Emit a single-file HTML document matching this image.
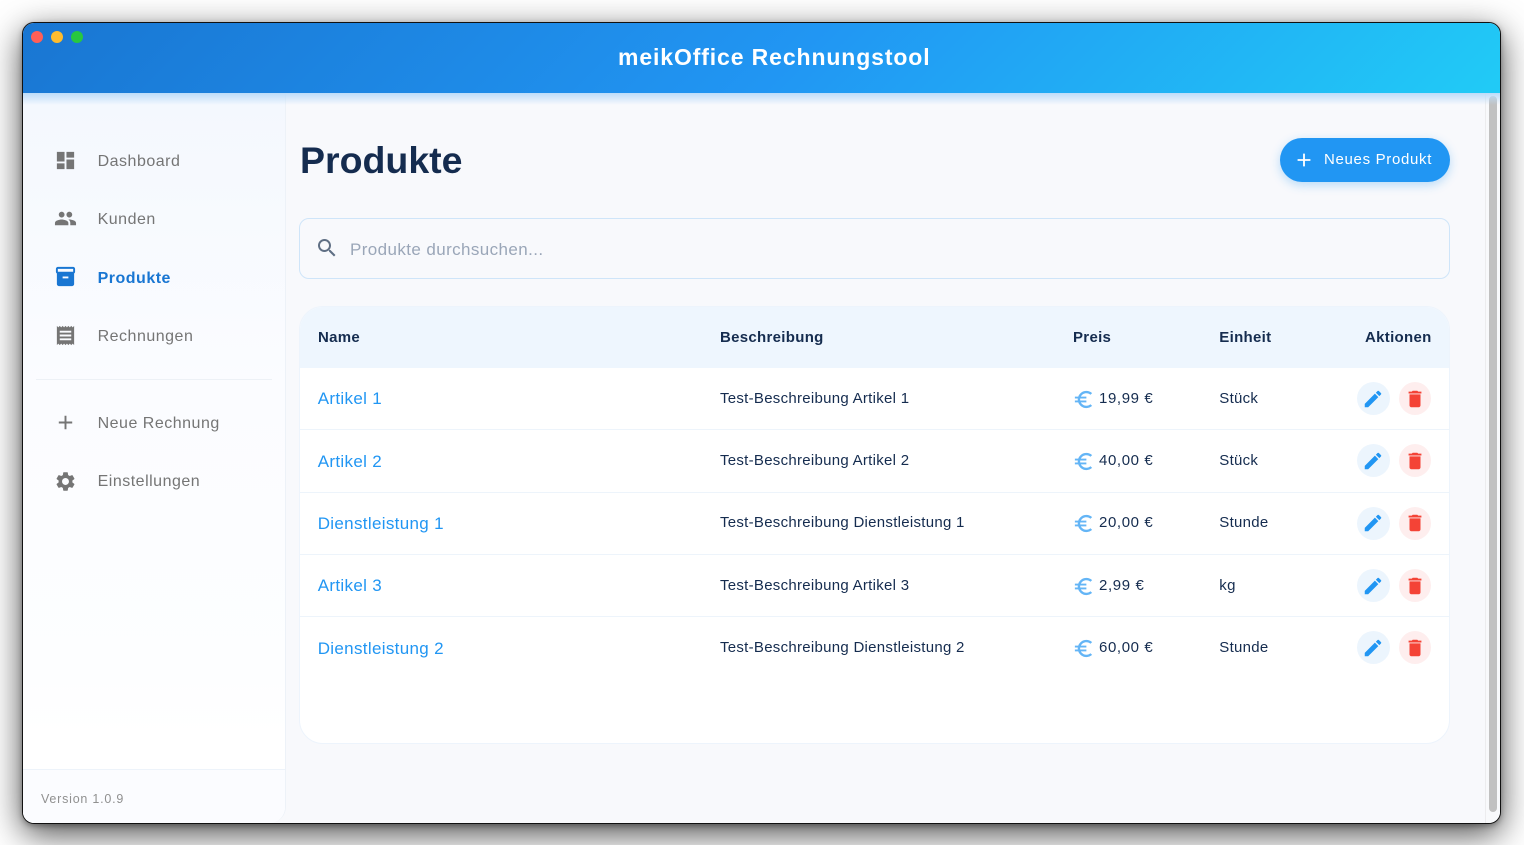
<!DOCTYPE html>
<html lang="de"><head><meta charset="utf-8"><title>meikOffice Rechnungstool</title>
<style>
*{box-sizing:border-box}
html,body{margin:0;width:1524px;height:845px;overflow:hidden;background:#fff;font-family:"Liberation Sans",sans-serif}
#win{position:absolute;left:22px;top:22px;width:1479px;height:802px;border-radius:12px;background:#f8f9fc;box-shadow:0 10px 34px rgba(0,0,0,.7),0 2px 6px rgba(0,0,0,.3);overflow:hidden;border:1px solid #111}
#page{position:absolute;left:-23px;top:-23px;width:1524px;height:845px}
.t{position:absolute;white-space:nowrap;line-height:20px}
svg{position:absolute;display:block}
#hdr{position:absolute;left:23px;top:23px;width:1477px;height:70px;background:linear-gradient(135deg,#1976d2 0%,#2196f3 52%,#21cbf6 100%);z-index:3}
#hsh{position:absolute;left:23px;top:93px;width:1477px;height:12px;background:linear-gradient(#bcdcf9,rgba(220,236,252,0));z-index:2}
#side{position:absolute;left:23px;top:93px;width:263px;height:730px;background:linear-gradient(#f4f8fe,#fbfcff 40%,#fdfeff 80%,#fff 88%);border-right:1px solid #edf2f8;border-bottom-right-radius:16px}
.dot{position:absolute;top:31px;width:12px;height:12px;border-radius:50%;z-index:4}
.nav{font-size:16px;color:#757575;left:97.6px;letter-spacing:.5px}
.ic{width:23px;height:23px;fill:#757575;left:54px}
.th{font-size:15px;font-weight:700;color:#152c4f;letter-spacing:.3px}
.nm{font-size:17px;color:#2196f3;left:317.7px;letter-spacing:.33px}
.cell{font-size:15px;color:#152c4f;letter-spacing:.28px}
.pr{letter-spacing:.62px;left:1099px}
.eu{left:1072px;width:23px;height:23px;fill:#64b5f6}
.c{position:absolute;width:33px;height:33px;border-radius:50%}
.ac{width:22px;height:22px}
.ln{position:absolute;left:300px;width:1150px;height:1px;background:#edf4fb}
</style></head><body>
<svg width="0" height="0" style="position:absolute">
<symbol id="euro" viewBox="0 0 24 24"><path d="M15 18.5c-2.51 0-4.68-1.42-5.76-3.5H15v-2H8.58c-.05-.33-.08-.66-.08-1s.03-.67.08-1H15V9H9.24C10.32 6.92 12.5 5.5 15 5.5c1.61 0 3.09.59 4.23 1.57L21 5.3C19.41 3.87 17.3 3 15 3c-3.92 0-7.24 2.51-8.48 6H3v2h3.06c-.04.33-.06.66-.06 1s.02.67.06 1H3v2h3.52c1.24 3.49 4.56 6 8.48 6 2.31 0 4.41-.87 6-2.3l-1.78-1.77c-1.13.98-2.6 1.57-4.22 1.57z"/></symbol>
<symbol id="edit" viewBox="0 0 24 24"><path d="M3 17.25V21h3.75L17.81 9.94l-3.75-3.75L3 17.25zM20.71 7.04c.39-.39.39-1.02 0-1.41l-2.34-2.34c-.39-.39-1.02-.39-1.41 0l-1.83 1.83 3.75 3.75 1.83-1.83z"/></symbol>
<symbol id="del" viewBox="0 0 24 24"><path d="M6 19c0 1.1.9 2 2 2h8c1.1 0 2-.9 2-2V7H6v12zM19 4h-3.5l-1-1h-5l-1 1H5v2h14V4z"/></symbol>
</svg>
<div id="win"><div id="page">
<div id="side"></div>
<div id="hsh"></div>
<div id="hdr"></div>
<div class="dot" style="left:31px;background:#ff5f57"></div>
<div class="dot" style="left:51px;background:#febc2e"></div>
<div class="dot" style="left:71px;background:#28c840"></div>
<div class="t" style="left:618px;top:47px;font-size:23px;font-weight:700;color:#fff;letter-spacing:.88px;z-index:4">meikOffice Rechnungstool</div>

<svg class="ic" style="top:149px" viewBox="0 0 24 24"><path d="M3 13h8V3H3v10zm0 8h8v-6H3v6zm10 0h8V11h-8v10zm0-18v6h8V3h-8z"/></svg>
<div class="t nav" style="top:151.5px">Dashboard</div>
<svg class="ic" style="top:207px" viewBox="0 0 24 24"><path d="M16 11c1.66 0 2.99-1.34 2.99-3S17.66 5 16 5c-1.66 0-3 1.34-3 3s1.34 3 3 3zm-8 0c1.66 0 2.99-1.34 2.99-3S9.66 5 8 5C6.34 5 5 6.34 5 8s1.34 3 3 3zm0 2c-2.33 0-7 1.17-7 3.5V19h14v-2.5c0-2.33-4.67-3.5-7-3.5zm8 0c-.29 0-.62.02-.97.05 1.16.84 1.97 1.97 1.97 3.45V19h6v-2.5c0-2.33-4.67-3.5-7-3.5z"/></svg>
<div class="t nav" style="top:210px">Kunden</div>
<svg class="ic" style="top:265px;fill:#1976d2" viewBox="0 0 24 24"><path d="M20 2H4c-1 0-2 .9-2 2v3.01c0 .72.43 1.34 1 1.69V20c0 1.1 1.1 2 2 2h14c.9 0 2-.9 2-2V8.7c.57-.35 1-.97 1-1.69V4c0-1.1-1-2-2-2zm-5 12H9v-2h6v2zm5-7H4V4l16-.02V7z"/></svg>
<div class="t nav" style="top:269px;color:#1976d2;font-weight:700;letter-spacing:.5px">Produkte</div>
<svg class="ic" style="top:324px" viewBox="0 0 24 24"><path d="M18 17H6v-2h12v2zm0-4H6v-2h12v2zm0-4H6V7h12v2zM3 22l1.5-1.5L6 22l1.5-1.5L9 22l1.5-1.5L12 22l1.5-1.5L15 22l1.5-1.5L18 22l1.5-1.5L21 22V2l-1.5 1.5L18 2l-1.5 1.5L15 2l-1.5 1.5L12 2l-1.5 1.5L9 2 7.5 3.5 6 2 4.5 3.5 3 2v20z"/></svg>
<div class="t nav" style="top:327px">Rechnungen</div>
<div style="position:absolute;left:36px;top:379px;width:236px;height:1px;background:#edf1f6"></div>
<svg class="ic" style="top:411px" viewBox="0 0 24 24"><path d="M19 13h-6v6h-2v-6H5v-2h6V5h2v6h6v2z"/></svg>
<div class="t nav" style="top:414px">Neue Rechnung</div>
<svg class="ic" style="top:470px" viewBox="0 0 24 24"><path d="M19.14 12.94c.04-.3.06-.61.06-.94 0-.32-.02-.64-.07-.94l2.03-1.58c.18-.14.23-.41.12-.61l-1.92-3.32c-.12-.22-.37-.29-.59-.22l-2.39.96c-.5-.38-1.03-.7-1.62-.94l-.36-2.54c-.04-.24-.24-.41-.48-.41h-3.84c-.24 0-.43.17-.47.41l-.36 2.54c-.59.24-1.13.57-1.62.94l-2.39-.96c-.22-.08-.47 0-.59.22L2.74 8.87c-.12.21-.08.47.12.61l2.03 1.58c-.05.3-.09.63-.09.94s.02.64.07.94l-2.03 1.58c-.18.14-.23.41-.12.61l1.92 3.32c.12.22.37.29.59.22l2.39-.96c.5.38 1.03.7 1.62.94l.36 2.54c.05.24.24.41.48.41h3.84c.24 0 .44-.17.47-.41l.36-2.54c.59-.24 1.13-.56 1.62-.94l2.39.96c.22.08.47 0 .59-.22l1.92-3.32c.12-.22.07-.47-.12-.61l-2.01-1.58zM12 15.6c-1.98 0-3.6-1.62-3.6-3.6s1.62-3.6 3.6-3.6 3.6 1.62 3.6 3.6-1.62 3.6-3.6 3.6z"/></svg>
<div class="t nav" style="top:472px">Einstellungen</div>
<div style="position:absolute;left:23px;top:769px;width:262px;height:1px;background:#edf3fa"></div>
<div style="position:absolute;left:23px;top:770px;width:262px;height:53px;background:#fbfcff;border-bottom-right-radius:16px"></div>
<div class="t" style="left:41px;top:789px;font-size:12.5px;color:#909090;letter-spacing:.78px">Version 1.0.9</div>

<div class="t" style="left:300px;top:140px;line-height:40px;font-size:37.5px;font-weight:700;color:#152c4f">Produkte</div>
<div style="position:absolute;left:1280px;top:138px;width:170px;height:44px;border-radius:22px;background:#2196f3;box-shadow:0 3px 10px rgba(33,150,243,.3)"></div>
<svg style="left:1293px;top:149px;width:22px;height:22px;fill:#fff" viewBox="0 0 24 24"><path d="M19 13h-6v6h-2v-6H5v-2h6V5h2v6h6v2z"/></svg>
<div class="t" style="left:1324px;top:149.5px;font-size:15px;color:#fff;letter-spacing:.68px">Neues Produkt</div>

<div style="position:absolute;left:299px;top:218px;width:1151px;height:61px;border:1px solid #cfe5f9;border-radius:10px;background:#f8f9fc"></div>
<svg style="left:315px;top:236px;width:24px;height:24px;fill:#5f6f84" viewBox="0 0 24 24"><path d="M15.5 14h-.79l-.28-.27C15.41 12.59 16 11.11 16 9.5 16 5.91 13.09 3 9.5 3S3 5.91 3 9.5 5.91 16 9.5 16c1.61 0 3.09-.59 4.23-1.57l.27.28v.79l5 4.99L20.49 19l-4.99-5zm-6 0C7.01 14 5 11.99 5 9.5S7.01 5 9.5 5 14 7.01 14 9.5 11.99 14 9.5 14z"/></svg>
<div class="t" style="left:350px;top:239.5px;font-size:17px;color:#9aa6b8;letter-spacing:.4px">Produkte durchsuchen...</div>

<div style="position:absolute;left:299px;top:306px;width:1151px;height:438px;border-radius:24px;background:#fff;border:1px solid #edf4fc;overflow:hidden"><div style="height:61px;background:#eef6fe"></div></div>
<div class="t th" style="left:318px;top:327.5px">Name</div>
<div class="t th" style="left:720px;top:327.5px">Beschreibung</div>
<div class="t th" style="left:1073px;top:327.5px">Preis</div>
<div class="t th" style="left:1219.3px;top:327.5px">Einheit</div>
<div class="t th" style="left:1365px;top:327.5px">Aktionen</div>
<div class="ln" style="top:429px"></div><div class="ln" style="top:492px"></div><div class="ln" style="top:554px"></div><div class="ln" style="top:616px"></div>

<div class="t nm" style="top:389px">Artikel 1</div>
<div class="t cell" style="left:720px;top:388.5px">Test-Beschreibung Artikel 1</div>
<svg class="eu" style="top:388px"><use href="#euro"/></svg>
<div class="t cell pr" style="top:388.5px">19,99 €</div>
<div class="t cell" style="left:1219.3px;top:388.5px">Stück</div>
<div class="c" style="left:1357px;top:382px;background:#ecf5fd"></div><svg class="ac" style="left:1362px;top:388px;fill:#2196f3"><use href="#edit"/></svg>
<div class="c" style="left:1399px;top:382px;width:32px;background:#feeeee"></div><svg class="ac" style="left:1404px;top:388px;fill:#f44336"><use href="#del"/></svg>

<div class="t nm" style="top:452px">Artikel 2</div>
<div class="t cell" style="left:720px;top:450.5px">Test-Beschreibung Artikel 2</div>
<svg class="eu" style="top:450px"><use href="#euro"/></svg>
<div class="t cell pr" style="top:450.5px">40,00 €</div>
<div class="t cell" style="left:1219.3px;top:450.5px">Stück</div>
<div class="c" style="left:1357px;top:444px;background:#ecf5fd"></div><svg class="ac" style="left:1362px;top:450px;fill:#2196f3"><use href="#edit"/></svg>
<div class="c" style="left:1399px;top:444px;width:32px;background:#feeeee"></div><svg class="ac" style="left:1404px;top:450px;fill:#f44336"><use href="#del"/></svg>

<div class="t nm" style="top:514px">Dienstleistung 1</div>
<div class="t cell" style="left:720px;top:512.5px">Test-Beschreibung Dienstleistung 1</div>
<svg class="eu" style="top:512px"><use href="#euro"/></svg>
<div class="t cell pr" style="top:512.5px">20,00 €</div>
<div class="t cell" style="left:1219.3px;top:512.5px">Stunde</div>
<div class="c" style="left:1357px;top:507px;background:#ecf5fd"></div><svg class="ac" style="left:1362px;top:512px;fill:#2196f3"><use href="#edit"/></svg>
<div class="c" style="left:1399px;top:507px;width:32px;background:#feeeee"></div><svg class="ac" style="left:1404px;top:512px;fill:#f44336"><use href="#del"/></svg>

<div class="t nm" style="top:576px">Artikel 3</div>
<div class="t cell" style="left:720px;top:575.5px">Test-Beschreibung Artikel 3</div>
<svg class="eu" style="top:575px"><use href="#euro"/></svg>
<div class="t cell pr" style="top:575.5px">2,99 €</div>
<div class="t cell" style="left:1219.3px;top:575.5px">kg</div>
<div class="c" style="left:1357px;top:569px;background:#ecf5fd"></div><svg class="ac" style="left:1362px;top:575px;fill:#2196f3"><use href="#edit"/></svg>
<div class="c" style="left:1399px;top:569px;width:32px;background:#feeeee"></div><svg class="ac" style="left:1404px;top:575px;fill:#f44336"><use href="#del"/></svg>

<div class="t nm" style="top:639px">Dienstleistung 2</div>
<div class="t cell" style="left:720px;top:637.5px">Test-Beschreibung Dienstleistung 2</div>
<svg class="eu" style="top:637px"><use href="#euro"/></svg>
<div class="t cell pr" style="top:637.5px">60,00 €</div>
<div class="t cell" style="left:1219.3px;top:637.5px">Stunde</div>
<div class="c" style="left:1357px;top:631px;background:#ecf5fd"></div><svg class="ac" style="left:1362px;top:637px;fill:#2196f3"><use href="#edit"/></svg>
<div class="c" style="left:1399px;top:631px;width:32px;background:#feeeee"></div><svg class="ac" style="left:1404px;top:637px;fill:#f44336"><use href="#del"/></svg>

<div style="position:absolute;left:1485px;top:93px;width:15px;height:730px;background:#f8f9fb;border-left:1px solid #ececee"></div>
<div style="position:absolute;left:1489px;top:96px;width:8px;height:716px;border-radius:4px;background:#c1c1c1"></div>
</div></div>
</body></html>
